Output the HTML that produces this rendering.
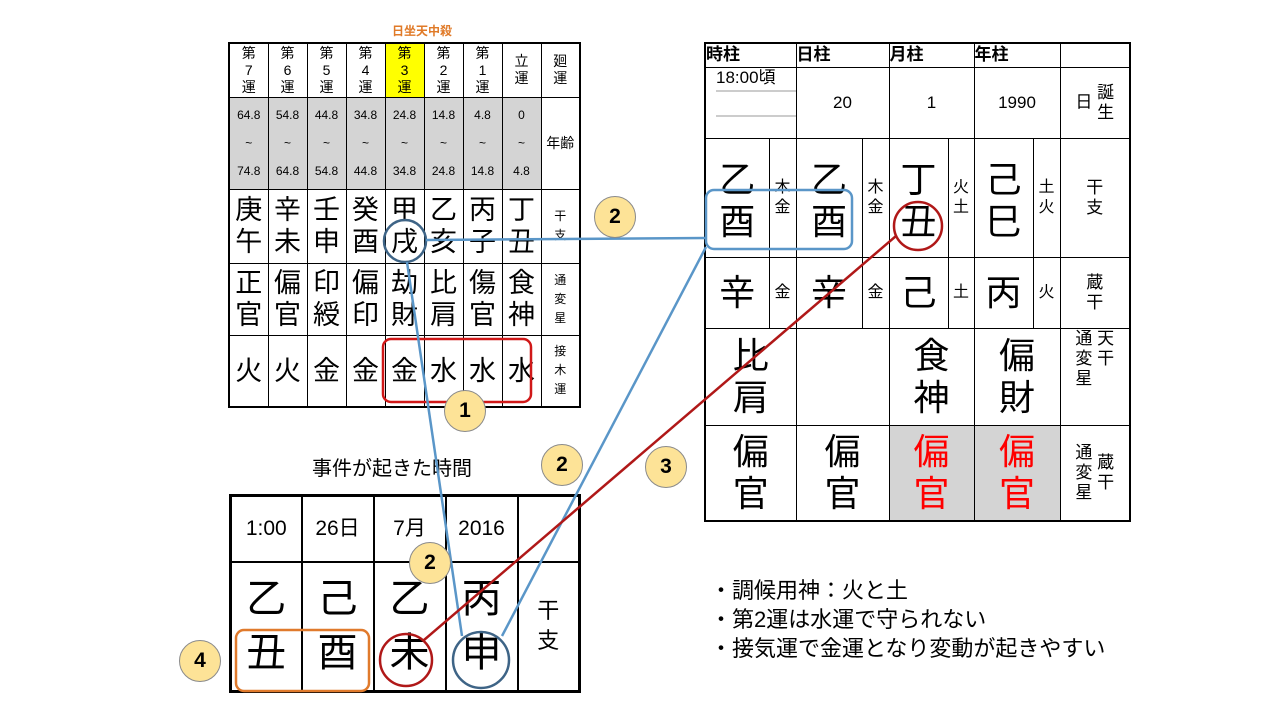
<!DOCTYPE html>
<html><head><meta charset="utf-8">
<style>
body{margin:0;width:1280px;height:720px;background:#fff;position:relative;overflow:hidden;font-family:"Liberation Sans","Noto Sans CJK JP",sans-serif;color:#000}
table{border-collapse:collapse;table-layout:fixed;position:absolute}
td{border:1px solid #000;text-align:center;vertical-align:middle;padding:0;line-height:1.1}
.a{position:absolute}
.badge{position:absolute;width:40px;height:40px;border-radius:50%;background:#fde397;border:1px solid #8a8a8a;font:bold 21px "Liberation Sans",sans-serif;text-align:center;line-height:40px}
#L td{font-size:27px;line-height:32px}
#L .h td{font-size:14px;line-height:17px}
#L .g td{background:#d4d4d4;font-size:12px;line-height:28px}
#L td.s{font-size:12px;line-height:19px;background:#fff}
#R td{font-size:36px;line-height:42px}
#R td.m{font-size:16px;line-height:20px}
#R td.sm{font-size:17px;line-height:20px}
#B td{font-size:40px;line-height:54px}
</style></head><body>
<div class="a" style="left:392px;top:22px;font-size:12px;font-weight:bold;color:#e07a28">日坐天中殺</div>

<table id="L" style="left:228px;top:42px;width:351px;border:2px solid #000">
<colgroup><col span="8" style="width:39px"><col style="width:39px"></colgroup>
<tr class="h" style="height:54px"><td>第<br>7<br>運</td><td>第<br>6<br>運</td><td>第<br>5<br>運</td><td>第<br>4<br>運</td><td style="background:#ffff00">第<br>3<br>運</td><td>第<br>2<br>運</td><td>第<br>1<br>運</td><td>立<br>運</td><td>廻<br>運</td></tr>
<tr class="g" style="height:92px"><td>64.8<br>~<br>74.8</td><td>54.8<br>~<br>64.8</td><td>44.8<br>~<br>54.8</td><td>34.8<br>~<br>44.8</td><td>24.8<br>~<br>34.8</td><td>14.8<br>~<br>24.8</td><td>4.8<br>~<br>14.8</td><td>0<br>~<br>4.8</td><td style="background:#fff;font-size:14px">年齢</td></tr>
<tr style="height:74px"><td>庚<br>午</td><td>辛<br>未</td><td>壬<br>申</td><td>癸<br>酉</td><td>甲<br>戌</td><td>乙<br>亥</td><td>丙<br>子</td><td>丁<br>丑</td><td class="s">干<br>支</td></tr>
<tr style="height:72px"><td>正<br>官</td><td>偏<br>官</td><td>印<br>綬</td><td>偏<br>印</td><td>劫<br>財</td><td>比<br>肩</td><td>傷<br>官</td><td>食<br>神</td><td class="s">通<br>変<br>星</td></tr>
<tr style="height:72px"><td>火</td><td>火</td><td>金</td><td>金</td><td>金</td><td>水</td><td>水</td><td>水</td><td class="s">接<br>木<br>運</td></tr>
</table>

<table id="R" style="left:704px;top:42px;width:425px;border:2px solid #000">
<colgroup><col style="width:64px"><col style="width:27px"><col style="width:66px"><col style="width:27px"><col style="width:59px"><col style="width:26px"><col style="width:59px"><col style="width:27px"><col style="width:70px"></colgroup>
<tr style="height:24px"><td colspan="2" class="sm" style="text-align:left;font-weight:bold">時柱</td><td colspan="2" class="sm" style="text-align:left;font-weight:bold">日柱</td><td colspan="2" class="sm" style="text-align:left;font-weight:bold">月柱</td><td colspan="2" class="sm" style="text-align:left;font-weight:bold">年柱</td><td></td></tr>
<tr style="height:71px"><td colspan="2" class="sm" style="vertical-align:top;text-align:left;padding-left:10px"><div style="border-bottom:2px solid #ccc;height:22px">18:00頃</div><div style="border-bottom:2px solid #ccc;height:23px"></div></td><td colspan="2" class="sm">20</td><td colspan="2" class="sm">1</td><td colspan="2" class="sm">1990</td><td class="sm"><span>日</span> <span style="display:inline-block;vertical-align:middle">誕<br>生</span></td></tr>
<tr style="height:119px"><td style="padding-top:6px">乙<br>酉</td><td class="m">木<br>金</td><td style="padding-top:6px">乙<br>酉</td><td class="m">木<br>金</td><td style="padding-top:6px">丁<br>丑</td><td class="m">火<br>土</td><td style="padding-top:6px">己<br>巳</td><td class="m">土<br>火</td><td class="sm">干<br>支</td></tr>
<tr style="height:71px"><td>辛</td><td class="m">金</td><td>辛</td><td class="m">金</td><td>己</td><td class="m">土</td><td>丙</td><td class="m">火</td><td class="sm">蔵<br>干</td></tr>
<tr style="height:97px"><td colspan="2">比<br>肩</td><td colspan="2"></td><td colspan="2">食<br>神</td><td colspan="2">偏<br>財</td><td class="sm" style="vertical-align:top"><span style="display:inline-block;vertical-align:top">通<br>変<br>星</span> <span style="display:inline-block;vertical-align:top">天<br>干</span></td></tr>
<tr style="height:96px"><td colspan="2">偏<br>官</td><td colspan="2">偏<br>官</td><td colspan="2" style="background:#d4d4d4;color:#f00">偏<br>官</td><td colspan="2" style="background:#d4d4d4;color:#f00">偏<br>官</td><td class="sm"><span style="display:inline-block;vertical-align:middle">通<br>変<br>星</span> <span style="display:inline-block;vertical-align:middle">蔵<br>干</span></td></tr>
</table>

<div class="a" style="left:312px;top:452px;font-size:20px">事件が起きた時間</div>
<table id="B" style="left:229px;top:494px;width:349px;border:3px solid #000">
<colgroup><col style="width:71px"><col style="width:72px"><col style="width:72px"><col style="width:72px"><col style="width:62px"></colgroup>
<tr style="height:66px"><td style="font-size:21px;line-height:24px;border-width:2px">1:00</td><td style="font-size:21px;line-height:24px;border-width:2px">26日</td><td style="font-size:21px;line-height:24px;border-width:2px">7月</td><td style="font-size:21px;line-height:24px;border-width:2px">2016</td><td style="border-width:2px"></td></tr>
<tr style="height:130px"><td style="border-width:2px">乙<br>丑</td><td style="border-width:2px">己<br>酉</td><td style="border-width:2px">乙<br>未</td><td style="border-width:2px">丙<br>申</td><td style="font-size:22px;line-height:30px;border-width:2px">干<br>支</td></tr>
</table>

<div class="a" style="left:710px;top:576px;font-size:22px;line-height:29px">・調候用神：火と土<br>・第2運は水運で守られない<br>・接気運で金運となり変動が起きやすい</div>

<svg class="a" style="left:0;top:0" width="1280" height="720">
<g fill="none" stroke-width="2.5">
<rect x="383" y="339" width="148" height="63" rx="8" stroke="#d01818"/>
<circle cx="405" cy="241" r="21" stroke="#3e6486"/>
<rect x="706" y="190" width="146" height="59" rx="8" stroke="#5a96c8"/>
<circle cx="918" cy="226" r="24" stroke="#b01818"/>
<rect x="236" y="630" width="133" height="61" rx="8" stroke="#e07a2c"/>
<circle cx="406" cy="660" r="26" stroke="#b01818"/>
<circle cx="481" cy="660" r="28" stroke="#3e6486"/>
</g>
<g stroke="#5a96c8" stroke-width="2.5">
<line x1="426" y1="240" x2="706" y2="238"/>
<line x1="407" y1="262" x2="462" y2="636"/>
<line x1="706" y1="247" x2="502" y2="636"/>
</g>
<line x1="896" y1="236" x2="424" y2="640" stroke="#b01818" stroke-width="2.5"/>
</svg>
<div class="badge" style="left:444px;top:390px">1</div>
<div class="badge" style="left:594px;top:196px">2</div>
<div class="badge" style="left:541px;top:444px">2</div>
<div class="badge" style="left:645px;top:446px">3</div>
<div class="badge" style="left:409px;top:542px">2</div>
<div class="badge" style="left:179px;top:640px">4</div>
</body></html>
